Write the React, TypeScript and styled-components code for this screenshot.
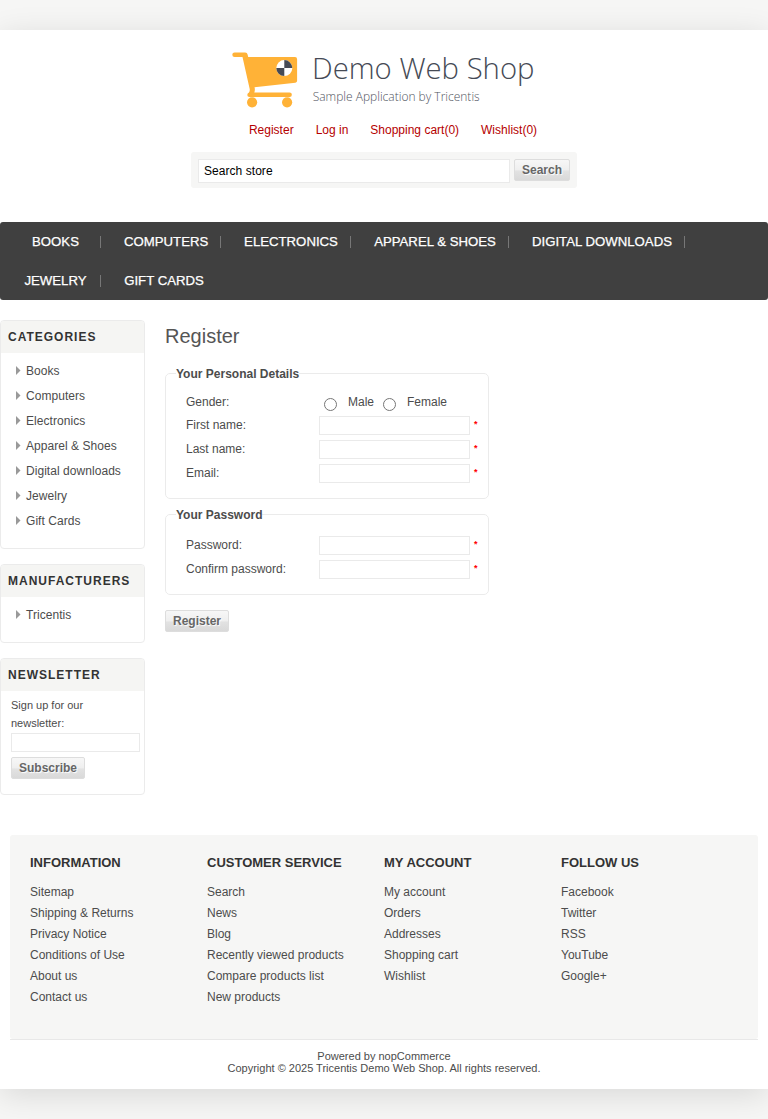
import React from "react";
import styled, { createGlobalStyle } from "styled-components";

const GlobalStyle = createGlobalStyle`
  *, *::before, *::after { box-sizing: border-box; }
  body {
    margin: 0;
    background: #f6f6f5;
    color: #4c4c4c;
    font: 12px/16px "Liberation Sans", Arial, sans-serif;
  }
  ul { margin: 0; padding: 0; list-style: none; }
  a { color: inherit; text-decoration: none; }
`;

const Viewport = styled.div`
  padding: 30px 0;
  overflow: hidden;
`;

const Page = styled.div`
  width: 768px;
  height: 1059px;
  display: flex;
  flex-direction: column;
  background: #fff;
  box-shadow: 0 6px 30px rgba(0, 0, 0, 0.12);
`;

const Header = styled.header`
  height: 192px;
  display: flex;
  flex-direction: column;
  align-items: center;
  padding-top: 20px;
`;

const Logo = styled.svg`
  display: block;
  width: 310px;
  height: 62px;
  flex: none;
  overflow: visible;
`;

const AccountLinks = styled.ul`
  display: flex;
  gap: 22px;
  margin-top: 10px;
  padding-left: 18px !important;
  color: #b50000;
`;

const SearchBox = styled.form`
  display: flex;
  align-items: flex-start;
  gap: 4px;
  width: 386px;
  height: 36px;
  margin-top: 14px;
  padding: 7px;
  border-radius: 3px;
  background: #f6f6f5;
`;

const TextInput = styled.input<{ $w: number; $h?: number }>`
  display: block;
  flex: none;
  width: ${(p) => p.$w}px;
  height: ${(p) => p.$h ?? 19}px;
  margin: 0;
  padding: 0 5px;
  border: 1px solid #eaeaea;
  border-radius: 0;
  background: #fff;
  color: #000;
  font: 12px "Liberation Sans", Arial, sans-serif;
  letter-spacing: 0.05px;
  outline: none;
`;

const Button = styled.button<{ $w: number }>`
  display: block;
  flex: none;
  width: ${(p) => p.$w}px;
  height: 22px;
  padding: 0 0 1px;
  border: 1px solid #ddd;
  border-radius: 2px;
  background: linear-gradient(#f7f7f7 0%, #efefef 48%, #e2e2e2 56%, #d9d9d9 100%);
  color: #666;
  font: bold 12px "Liberation Sans", Arial, sans-serif;
  text-shadow: 1px 1px 1px #fff;
  text-align: center;
  white-space: nowrap;
`;

const Nav = styled.ul`
  display: flex;
  flex-wrap: wrap;
  height: 78px;
  flex: none;
  padding-left: 23px !important;
  border-radius: 3px;
  background: #404040;
  color: #fff;
  font-size: 13.2px;
`;

const NavItem = styled.li<{ $w: number; $last?: boolean }>`
  display: flex;
  align-items: center;
  height: 39px;
  margin-right: 23px;
  a {
    width: ${(p) => p.$w}px;
    text-align: center;
    white-space: nowrap;
    -webkit-text-stroke: 0.25px #fff;
  }
  &::after {
    content: "";
    display: ${(p) => (p.$last ? "none" : "block")};
    width: 1px;
    height: 12px;
    margin: 1px 0 0 12px;
    background: #777;
  }
`;

const Content = styled.div`
  display: flex;
  align-items: flex-start;
  gap: 20px;
  height: 535px;
  flex: none;
  padding-top: 20px;
`;

const Sidebar = styled.aside`
  width: 145px;
  display: flex;
  flex-direction: column;
  gap: 15px;
`;

const Block = styled.section`
  border: 1px solid #ebebeb;
  border-radius: 4px;
  overflow: hidden;
`;

const BlockTitle = styled.h3`
  height: 32px;
  margin: 0;
  padding-left: 7px;
  background: #f5f5f3;
  color: #333;
  font-size: 12px;
  line-height: 32px;
  letter-spacing: 1px;
`;

const BlockList = styled.ul`
  padding: 5px 0 15px 15px !important;
`;

const BlockItem = styled.li`
  display: flex;
  align-items: center;
  gap: 5.5px;
  height: 25px;
  a { letter-spacing: 0.05px; }
  &::before {
    content: "";
    width: 4.5px;
    height: 9px;
    background: #999;
    clip-path: polygon(0 0, 100% 50%, 0 100%);
  }
`;

const Newsletter = styled.div`
  padding: 5px 0 15px 10px;
  p {
    width: 100px;
    margin: 0 0 1px;
    font-size: 11px;
    line-height: 18px;
  }
  button { margin-top: 5px; }
`;

const Main = styled.main`
  width: 324px;
`;

const Title = styled.h1`
  height: 30px;
  margin: 1px 0 15px;
  color: #555;
  font-size: 20px;
  font-weight: normal;
  line-height: 30px;
`;

const Fieldset = styled.fieldset<{ $top: number; $gap: number }>`
  margin: 0 0 ${(p) => p.$gap}px;
  padding: ${(p) => p.$top}px 0 12px 20px;
  border: 1px solid #ebebeb;
  border-radius: 5px;
  legend {
    height: 15px;
    margin-left: -10px;
    padding: 0;
    font-weight: bold;
  }
`;

const FieldRow = styled.div`
  display: flex;
  height: 24px;
  padding-top: 2px;
`;

const Label = styled.label<{ $line?: number }>`
  width: 133px;
  line-height: ${(p) => p.$line ?? 19}px;
`;

const Required = styled.span`
  margin-left: 4px;
  color: #f00;
  font-size: 9px;
  font-weight: bold;
  line-height: 16px;
`;

const Option = styled.label<{ $w: number }>`
  display: flex;
  gap: 11px;
  width: ${(p) => p.$w}px;
  margin-left: 5px;
  line-height: 21px;
  input {
    width: 13px;
    height: 13px;
    margin: 6px 0 0;
  }
`;

const Footer = styled.footer`
  margin: 0 10px;
`;

const FooterMenu = styled.div`
  display: grid;
  grid-template-columns: repeat(4, 177px);
  height: 204px;
  padding: 20px 0 0 20px;
  border-radius: 3px;
  background: #f6f6f5;
  h3 {
    margin: 0 0 13px;
    color: #333;
    font-size: 13px;
    line-height: 16px;
    white-space: nowrap;
  }
  li { height: 21px; line-height: 16px; }
`;

const Legal = styled.div`
  padding-top: 10px;
  border-top: 1px solid #e8e8e8;
  font-size: 11px;
  line-height: 12px;
  text-align: center;
`;

const navItems = [
  { label: "BOOKS", width: 65 },
  { label: "COMPUTERS", width: 84 },
  { label: "ELECTRONICS", width: 94 },
  { label: "APPAREL & SHOES", width: 122 },
  { label: "DIGITAL DOWNLOADS", width: 140 },
  { label: "JEWELRY", width: 65 },
  { label: "GIFT CARDS", width: 80 },
];

const categories = ["Books", "Computers", "Electronics", "Apparel & Shoes", "Digital downloads", "Jewelry", "Gift Cards"];

const footerColumns = [
  { title: "INFORMATION", links: ["Sitemap", "Shipping & Returns", "Privacy Notice", "Conditions of Use", "About us", "Contact us"] },
  { title: "CUSTOMER SERVICE", links: ["Search", "News", "Blog", "Recently viewed products", "Compare products list", "New products"] },
  { title: "MY ACCOUNT", links: ["My account", "Orders", "Addresses", "Shopping cart", "Wishlist"] },
  { title: "FOLLOW US", links: ["Facebook", "Twitter", "RSS", "YouTube", "Google+"] },
];

function ShopLogo() {
  return (
    <Logo viewBox="0 0 310 62">
      <g fill="#ffb237">
        <path d="M5.6 2.4H16.2Q18.2 2.4 18.6 4.4L19.2 7.1H66Q68.1 7.1 68.1 9.2V30.8Q68.1 32.5 66.4 32.7L25.5 37.2Q26.3 39.5 25.3 42.6H60.6A2.25 2.25 0 0 1 60.6 47.1H20.5Q18.3 47.1 18.3 45Q18.3 42.9 20 42.4Q21 41 20.7 39L13.5 7H5.6A2.3 2.3 0 0 1 5.6 2.4Z" />
        <circle cx="23.1" cy="52.3" r="5.1" />
        <circle cx="58.1" cy="52.3" r="5.1" />
      </g>
      <circle cx="55.3" cy="18.1" r="8" fill="#fff" />
      <path d="M55.3 18.1V10.1A8 8 0 0 1 63.3 18.1ZM55.3 18.1V26.1A8 8 0 0 1 47.3 18.1Z" fill="#454a55" />
      <g fontFamily="Open Sans, sans-serif" fontWeight="300">
        <text x="83" y="28.5" fontSize="29.5" textLength="222.5" lengthAdjust="spacingAndGlyphs" fill="#454a55">Demo Web Shop</text>
        <text x="83.7" y="51.2" fontSize="12.2" textLength="167" lengthAdjust="spacingAndGlyphs" fill="#50545e">Sample Application by Tricentis</text>
      </g>
    </Logo>
  );
}

function Field({ label, type = "text" }: { label: string; type?: string }) {
  return (
    <FieldRow>
      <Label>{label}</Label>
      <TextInput $w={151} type={type} />
      <Required>*</Required>
    </FieldRow>
  );
}

function LinkBlock({ title, links }: { title: string; links: string[] }) {
  return (
    <Block>
      <BlockTitle>{title}</BlockTitle>
      <BlockList>
        {links.map((l) => (
          <BlockItem key={l}><a href="#">{l}</a></BlockItem>
        ))}
      </BlockList>
    </Block>
  );
}

export default function App() {
  return (
    <Viewport>
      <GlobalStyle />
      <Page>
        <Header>
          <ShopLogo />
          <AccountLinks>
            {["Register", "Log in", "Shopping cart(0)", "Wishlist(0)"].map((l) => (
              <li key={l}><a href="#">{l}</a></li>
            ))}
          </AccountLinks>
          <SearchBox>
            <TextInput $w={312} $h={24} defaultValue="Search store" />
            <Button $w={56} type="button">Search</Button>
          </SearchBox>
        </Header>
        <Nav>
          {navItems.map((n, i) => (
            <NavItem key={n.label} $w={n.width} $last={i === navItems.length - 1}>
              <a href="#">{n.label}</a>
            </NavItem>
          ))}
        </Nav>
        <Content>
          <Sidebar>
            <LinkBlock title="CATEGORIES" links={categories} />
            <LinkBlock title="MANUFACTURERS" links={["Tricentis"]} />
            <Block>
              <BlockTitle>NEWSLETTER</BlockTitle>
              <Newsletter>
                <p>Sign up for our newsletter:</p>
                <TextInput $w={129} />
                <Button $w={74} type="button">Subscribe</Button>
              </Newsletter>
            </Block>
          </Sidebar>
          <Main>
            <Title>Register</Title>
            <Fieldset $top={9} $gap={8}>
              <legend>Your Personal Details</legend>
              <FieldRow>
                <Label $line={21}>Gender:</Label>
                <Option $w={54}><input type="radio" name="gender" />Male</Option>
                <Option $w={70}><input type="radio" name="gender" />Female</Option>
              </FieldRow>
              <Field label="First name:" />
              <Field label="Last name:" />
              <Field label="Email:" />
            </Fieldset>
            <Fieldset $top={12} $gap={15}>
              <legend>Your Password</legend>
              <Field label="Password:" type="password" />
              <Field label="Confirm password:" type="password" />
            </Fieldset>
            <Button $w={64} type="button">Register</Button>
          </Main>
        </Content>
        <Footer>
          <FooterMenu>
            {footerColumns.map((c) => (
              <div key={c.title}>
                <h3>{c.title}</h3>
                <ul>{c.links.map((l) => <li key={l}><a href="#">{l}</a></li>)}</ul>
              </div>
            ))}
          </FooterMenu>
          <Legal>
            <div>Powered by <a href="#">nopCommerce</a></div>
            <div>Copyright © 2025 Tricentis Demo Web Shop. All rights reserved.</div>
          </Legal>
        </Footer>
      </Page>
    </Viewport>
  );
}
